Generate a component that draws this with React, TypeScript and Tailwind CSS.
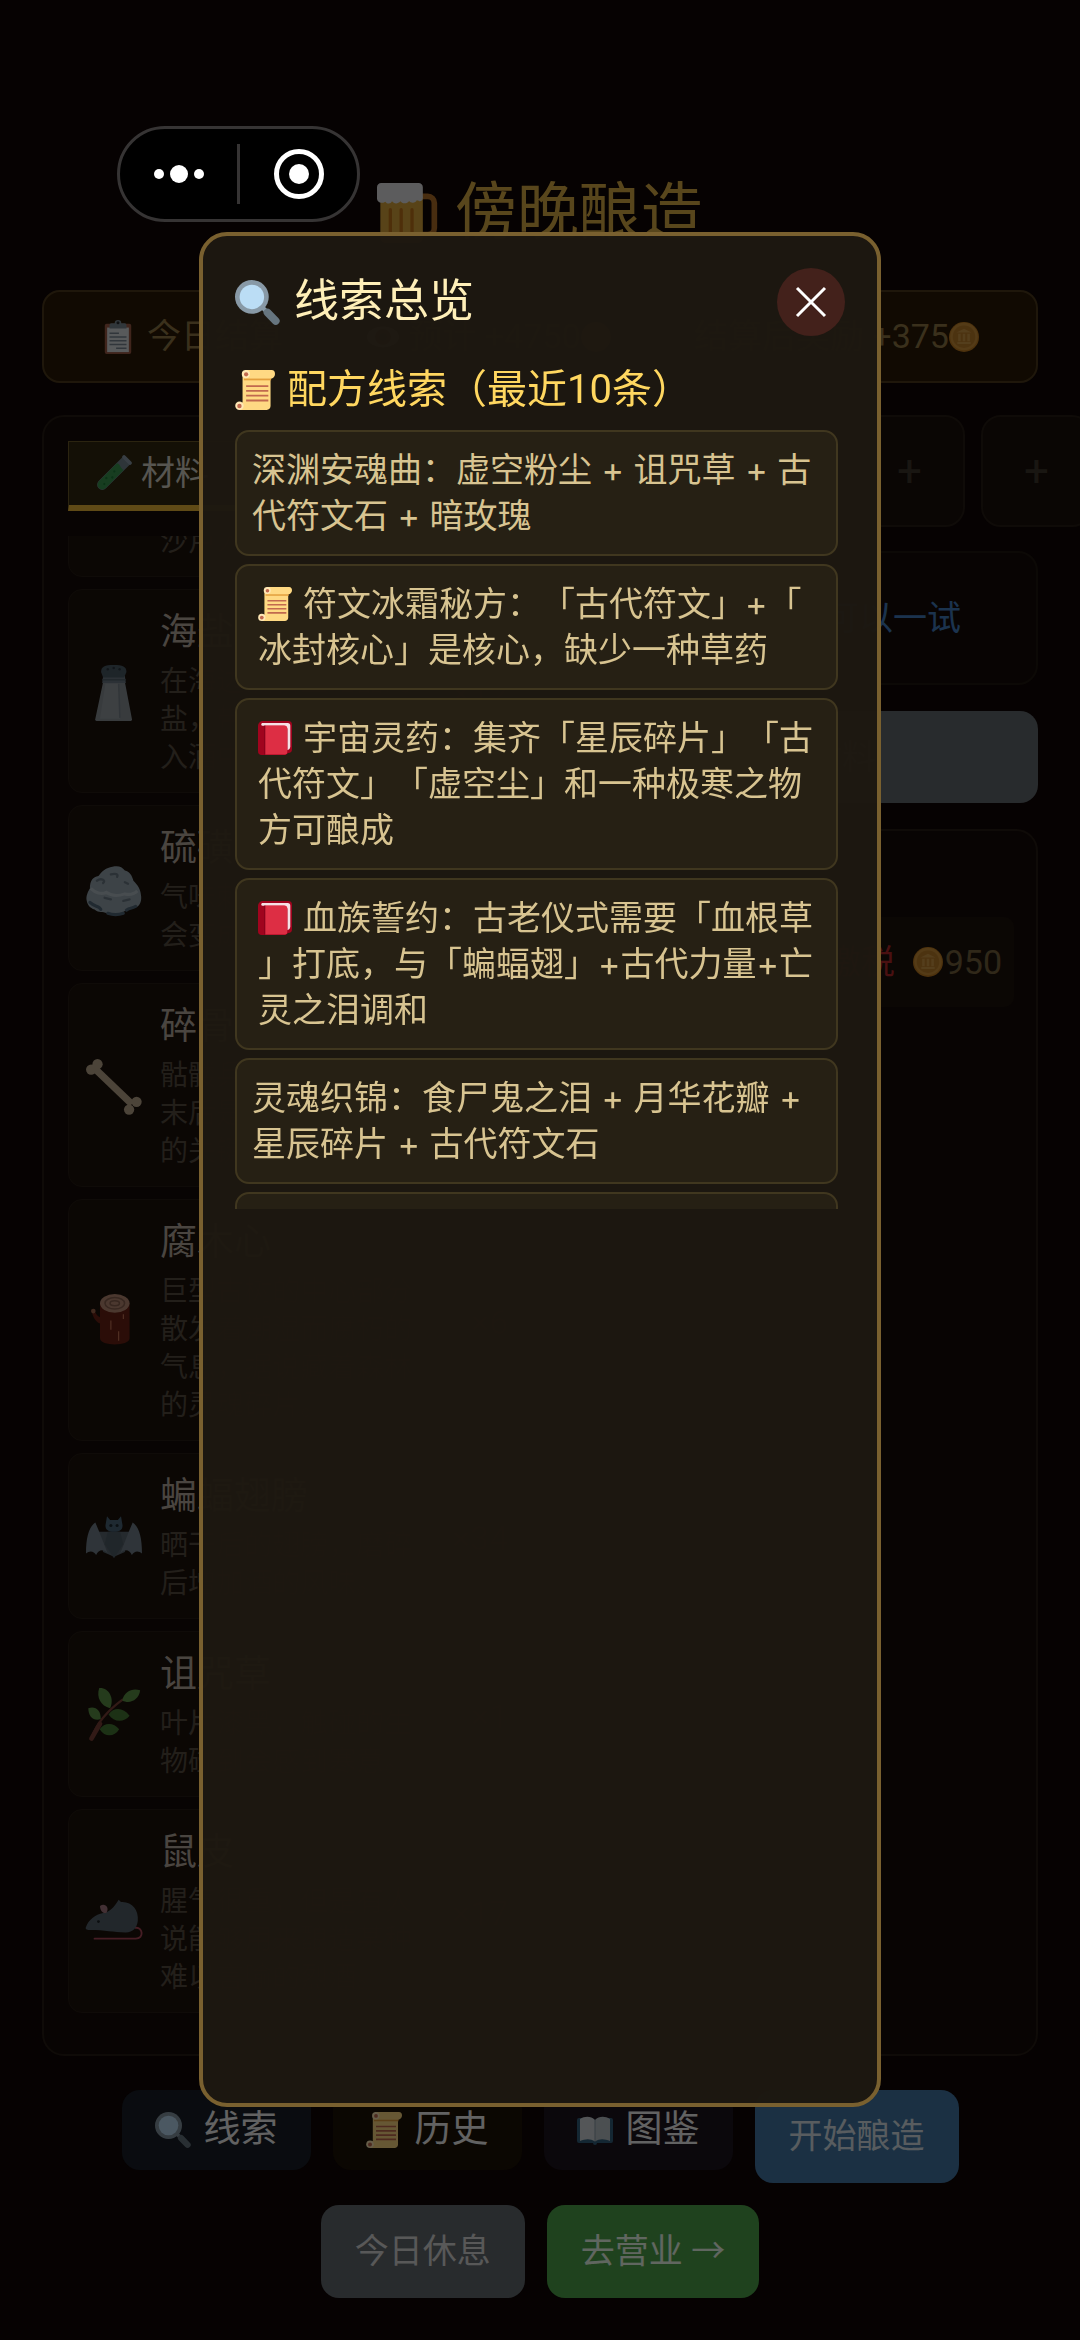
import type { ReactNode } from 'react';

type IconName =
  | 'beer'
  | 'clipboard'
  | 'tube'
  | 'search'
  | 'scroll'
  | 'book'
  | 'openBook'
  | 'coin'
  | 'eye'
  | 'salt'
  | 'rock'
  | 'bone'
  | 'wood'
  | 'bat'
  | 'herb'
  | 'rat';

const icons: Record<IconName, ReactNode> = {
  beer: (
    <>
      <path d="M26 8h6a4 4 0 0 1 4 4v15a4 4 0 0 1-4 4h-6" fill="none" stroke="#B5702A" strokeWidth="3.4" transform="translate(-1.6 0)" />
      <path d="M2 8h25.500v25a3 3 0 0 1-3 3h-19.500a3 3 0 0 1-3-3z" fill="#DDA93C" />
      <path d="M8 16v15M14.500 16v15M21 16v15" stroke="#C4761A" strokeWidth="2" strokeLinecap="round" />
      <path d="M2.500 0h22.500a2.500 2.500 0 0 1 2.500 2.500V9c0 2-2.500 2.500-3.500 1.200C23 12.500 20 12 19.300 10.800 18 12.800 15 12.500 14 11c-1.500 1.800-4 1.500-5 0-1 2-3 1.500-4 .2C2.500 12.800 0 11.500 0 9.500v-7A2.500 2.500 0 0 1 2.500 0z" fill="#E6E7E8" />
    </>
  ),
  clipboard: (
    <>
      <rect x="4" y="4" width="28" height="32" rx="2" fill="#A05C48" />
      <rect x="6.500" y="8" width="23" height="26" fill="#DCE0E4" />
      <path d="M11 3.500h3.500a3.500 3.500 0 0 1 7 0H25a2 2 0 0 1 2 2V9H9V5.500a2 2 0 0 1 2-2z" fill="#7C8A94" />
      <circle cx="18" cy="3" r="1.600" fill="#292F33" />
      <path d="M9 14h10M9 18h18M9 22h18M9 26h18M16 30h11" stroke="#7A8894" strokeWidth="1.600" />
    </>
  ),
  tube: (
    <g transform="rotate(45 18 18)">
      <path d="M12.500-3h11v37a5.500 5.500 0 0 1-11 0z" fill="#73848E" />
      <path d="M13 7c4-2 6 1.500 10 0v27a5 5 0 0 1-10 0z" fill="#3A9A52" />
      <rect x="11.500" y="-5" width="13" height="4" rx="2" fill="#8C9CAA" />
      <circle cx="17" cy="15" r="1.200" fill="#1F7E3A" />
      <circle cx="20" cy="21" r="1.300" fill="#1F7E3A" />
      <circle cx="16" cy="26" r="1.300" fill="#1F7E3A" />
      <circle cx="19" cy="32" r="1.200" fill="#1F7E3A" />
    </g>
  ),
  search: (
    <>
      <path d="M21 21l4 4" stroke="#8899A6" strokeWidth="3.500" />
      <path d="M26 26l6.600 6.800" stroke="#66757F" strokeWidth="6.200" strokeLinecap="round" />
      <circle cx="13.500" cy="13.500" r="13.500" fill="#8899A6" />
      <circle cx="13.500" cy="13.500" r="9.800" fill="#BBDDF5" />
    </>
  ),
  scroll: (
    <>
      <path d="M9.500 0H33c2 0 3 1.500 3 3.500S34.500 7.500 32 8v24.500c0 2-1.500 3.500-3.500 3.500H4V31l2.800-2V4z" fill="#FFD983" />
      <path d="M8 8.500h24.500" stroke="#E39F3D" strokeWidth="1.600" />
      <circle cx="9.800" cy="3.700" r="3.700" fill="#FFE8B6" />
      <circle cx="10" cy="3.900" r="1.900" fill="#C1694F" />
      <circle cx="4" cy="32.200" r="3.800" fill="#FFE8B6" />
      <circle cx="4" cy="32.400" r="2" fill="#C1694F" />
      <path d="M10 14.500h20M10 18.800h20M10 23.100h20M10 27.400h20" stroke="#C1694F" strokeWidth="1.700" />
    </>
  ),
  book: (
    <>
      <path d="M5 0h27a4 4 0 0 1 4 4v26a4 4 0 0 1-4 4l-3 2H4a4 4 0 0 1-4-4V5a5 5 0 0 1 5-5z" fill="#A0041E" />
      <path d="M5 2.200h26.500a2.700 2.700 0 0 1 2.700 2.700v22.600a4 4 0 0 1-3 3.500V8L28 5H4.500c-1.500 0-1.500-2.800.5-2.800z" fill="#F5E1E6" />
      <path d="M7.500 4.800h20.500a3 3 0 0 1 3 3V33a2.500 2.500 0 0 1-2.500 2.500H7.500z" fill="#DD2E44" />
      <path d="M7.200 4.500v31" stroke="#7C0119" strokeWidth=".8" />
    </>
  ),
  openBook: (
    <>
      <path d="M2 6h13l3 2 3-2h13a2 2 0 0 1 2 2v21a2 2 0 0 1-2 2H20a2 2 0 0 1-4 0H2a2 2 0 0 1-2-2V8a2 2 0 0 1 2-2z" fill="#34617F" />
      <path d="M3 7c5-3 11-3 15 1v21.500C13 26 8 27 3 29z" fill="#D2D8DC" />
      <path d="M33 7c-5-3-11-3-15 1v21.500c5-3.500 10-2.500 15-.5z" fill="#BCC5CB" />
      <path d="M18 8v21" stroke="#8899A6" strokeWidth="1" />
    </>
  ),
  coin: (
    <>
      <circle cx="18" cy="18" r="18" fill="#C27D22" />
      <circle cx="18" cy="17.400" r="16.500" fill="#D1943A" />
      <circle cx="18" cy="17.600" r="13.500" fill="#BF7F2A" />
      <path d="M18 8l9 4.500H9zM11 14h3v9h-3zM16.500 14h3v9h-3zM22 14h3v9h-3zM10 24h16v2.500H10z" fill="#D39B48" />
    </>
  ),
  eye: (
    <>
      <ellipse cx="18" cy="18" rx="17" ry="11" fill="#F5F8FA" />
      <circle cx="18" cy="18" r="8.500" fill="#8A4B38" />
      <circle cx="18" cy="18" r="4" fill="#292F33" />
    </>
  ),
  salt: (
    <>
      <path d="M11 11h14l4.500 23.500a1 1 0 0 1-1 1.500h-21.500a1 1 0 0 1-1-1.500z" fill="#8C949A" />
      <path d="M12.500 12h8.500l1 22.500H9z" fill="#99A0A6" />
      <path d="M21 12l.8 22" stroke="#7C868E" strokeWidth="1" />
      <path d="M11 7h14l.6 4.500H10.400z" fill="#6F7C87" />
      <path d="M10.500 9.500h15" stroke="#56646F" strokeWidth="1" />
      <path d="M9.700 4.500C9.700 1 12 0 17.800 0S26 1 26 4.500L24.500 8h-13.500z" fill="#4D5C68" />
      <circle cx="14" cy="2.800" r=".8" fill="#2E3942" />
      <circle cx="17.800" cy="2" r=".8" fill="#2E3942" />
      <circle cx="21.600" cy="2.800" r=".8" fill="#2E3942" />
    </>
  ),
  rock: (
    <>
      <path d="M.5 25c-.8-3 .8-6 2-8 0-5 2-7.500 5.500-8 2-3 5-5.500 9-6 4-.8 6 0 8 2.500 3 .8 4.500 3 5.500 6.500 3 3 4.500 5.500 4.800 9 .8 4-.8 7-2.800 8-3 1.500-5 1-7.500 2.500-3 2.500-8 3-11.500 1.500-3-1.500-5 0-8-2.500-3-1-4.500-3-5-5.500z" fill="#98A7B1" />
      <path d="M3 17c3 3 7 4 10 2.500 4 3 9 2 12 1 4 1 6 0 8-2" fill="none" stroke="#B4C0C8" strokeWidth="2" />
      <path d="M7 12c3-2 6 0 4 1.500M16 8c3-1 5 0 4 1.500M25 13l2 1M12 23l4 1M24 25l4-1" fill="none" stroke="#6D7C87" strokeWidth="1.500" strokeLinecap="round" />
      <path d="M2.500 26c3 3 6 2 7 4.500M26 31c2-2 4-1 6-2.500M14 33c3 1 7 1 10 0" fill="none" stroke="#54697B" strokeWidth="2" strokeLinecap="round" />
    </>
  ),
  bone: (
    <g fill="#BFAB90">
      <path d="M6 6.500L29.500 29" stroke="#BFAB90" strokeWidth="4.500" />
      <circle cx="3.300" cy="6.800" r="3.300" />
      <circle cx="7.400" cy="3.300" r="3.300" />
      <circle cx="27.700" cy="32.500" r="3.300" />
      <circle cx="32.500" cy="27.500" r="3.300" />
    </g>
  ),
  wood: (
    <>
      <path d="M9 6h19v22.500c0 5.300-19 5.300-19 0V19c-3-1-5-5-5.300-8l1.800-.5c.5 2 1.500 3.500 3.500 4.500z" fill="#6B2114" />
      <circle cx="4.700" cy="11" r="1.500" fill="#A0664C" />
      <ellipse cx="18.500" cy="6" rx="9.500" ry="6" fill="#BC8D77" />
      <ellipse cx="18.500" cy="6" rx="6.300" ry="3.700" fill="none" stroke="#8A6250" strokeWidth="1" />
      <ellipse cx="18.500" cy="6" rx="3" ry="1.600" fill="none" stroke="#8A6250" strokeWidth="1" />
      <path d="M16 17v6M21 24v6M24 13v3" stroke="#D07C5E" strokeWidth=".7" />
    </>
  ),
  bat: (
    <g transform="translate(0 -1)">
      <path d="M8 15h20l-3 13-7 3-7-3z" fill="#5C6973" />
      <path d="M6 9c-4 3-6 9-6 20 2-2 5-2 6.500 1C8 26 12 26 14 29L8.500 15z" fill="#75828E" />
      <path d="M30 9c4 3 6 9 6 20-2-2-5-2-6.500 1C28 26 24 26 22 29l5.500-14z" fill="#75828E" />
      <path d="M18 32l-6-9 2-8h8l2 8z" fill="#525F69" />
      <path d="M13.500 5l2 2.500h5l2-2.500 1 6c0 3-2 4-5.500 4s-5.500-1-5.500-4z" fill="#4B667B" />
      <circle cx="16" cy="11" r="1" fill="#1D2930" />
      <circle cx="20" cy="11" r="1" fill="#1D2930" />
    </g>
  ),
  herb: (
    <>
      <path d="M4 31C7 23 12 16 23.500 7.500" fill="none" stroke="#7D4238" strokeWidth="1.500" strokeLinecap="round" />
      <path d="M3.500 32.500L9 23" stroke="#7D4238" strokeWidth="3" strokeLinecap="round" />
      <path d="M8.500 0c6-.5 10 6.500 7 13C9.500 11.500 6.500 6 8.500 0z" fill="#5E9447" />
      <path d="M23.300 8c1.500-6 6.500-8 11.500-6.500-.8 6.500-7 9-11.500 6.500z" fill="#5E9447" />
      <path d="M1.500 13c4.500-1.500 8 1 8 7-4.500 1.500-8-1.500-8-7z" fill="#5E9447" />
      <path d="M14.500 17c3.500-5 9.500-4.500 13.500.8-3.500 4.500-10 4.500-13.500-.8z" fill="#487C35" />
      <path d="M8.800 26.500c3-4.500 9-4.500 12.500 0-3 5-9 5.500-12.500 0z" fill="#487C35" />
    </>
  ),
  rat: (
    <>
      <path d="M32 27.500c4.500-.5 5.500 7 0 7H5.500" fill="none" stroke="#B04A5A" strokeWidth="1.200" strokeLinecap="round" />
      <path d="M0 27c1.500-4.500 6-8 11-9 4-.5 7-3.500 10-8.500l1.500 1.500c7-.5 11.500 5 10.800 12-.5 4.500-3 7.500-7.800 7.500-8 0-13-1.500-23-1.500-2.500 0-3-1-2.500-2z" fill="#56636D" />
      <path d="M9 13.500c3-2.500 6.500 1 4 4.500-2.500.5-4-2-4-4.500z" fill="#A77883" />
      <circle cx="8" cy="23.500" r=".9" fill="#1D2327" />
    </>
  ),
};

const Icon = ({ name, className }: { name: IconName; className: string }) => (
  <svg viewBox="0 0 36 36" className={`shrink-0 overflow-visible ${className}`} aria-hidden="true">
    {icons[name]}
  </svg>
);

const materials: { icon: IconName; name: string; count: number; lines: string[] }[] = [
  { icon: 'rock', name: '沙晶', count: 9, lines: ['荒漠深处的透明晶体', '夜里会发出微弱的光', '沙卢人用它来占卜。'] },
  { icon: 'salt', name: '海盐', count: 12, lines: ['在海边礁石上结晶的', '盐，带着潮汐气息加', '入酒中可提鲜。'] },
  { icon: 'rock', name: '硫磺', count: 8, lines: ['气味刺鼻的矿石燃烧', '会变成蓝色火焰。'] },
  { icon: 'bone', name: '碎骨', count: 15, lines: ['骷髅兵的残骸磨成粉', '末后是许多诡异药剂', '的关键材料。'] },
  { icon: 'wood', name: '腐木心', count: 6, lines: ['巨型古树的中心部分', '散发着潮湿而腐朽的', '气息，据说藏着森林', '的灵魂碎片。'] },
  { icon: 'bat', name: '蝙蝠翅膀', count: 34, lines: ['晒干后的翅膀，磨碎', '后增加酒的风味。'] },
  { icon: 'herb', name: '诅咒草', count: 1, lines: ['叶片漆黑，触碰的生', '物碰到会感到寒意。'] },
  { icon: 'rat', name: '鼠皮', count: 17, lines: ['腥气很重，但是有人', '说能够用来酿造某种', '难以言喻的烈酒。'] },
];

const clues: { icon?: IconName; text: string }[] = [
  { text: '深渊安魂曲：虚空粉尘 + 诅咒草 + 古代符文石 + 暗玫瑰' },
  { icon: 'scroll', text: '符文冰霜秘方：「古代符文」+「冰封核心」是核心，缺少一种草药' },
  { icon: 'book', text: '宇宙灵药：集齐「星辰碎片」「古代符文」「虚空尘」和一种极寒之物方可酿成' },
  { icon: 'book', text: '血族誓约：古老仪式需要「血根草」打底，与「蝙蝠翅」+古代力量+亡灵之泪调和' },
  { text: '灵魂织锦：食尸鬼之泪 + 月华花瓣 + 星辰碎片 + 古代符文石' },
  { text: '月影佳酿：月华花瓣 + 蝙蝠翅膀 + 海盐' },
];

const tools: { icon: IconName; label: string; color: string }[] = [
  { icon: 'search', label: '线索', color: 'bg-[#192028]' },
  { icon: 'scroll', label: '历史', color: 'bg-[#1c1205]' },
  { icon: 'openBook', label: '图鉴', color: 'bg-[#1c141e]' },
];

const SummaryBar = () => (
  <div className="mt-[37px] flex h-[93px] items-center justify-between rounded-[18px] border-2 border-[#4e3b1c] bg-[#2b1a05] px-[57px] text-[34px] text-[#917846]">
    <div className="flex items-center gap-3">
      <Icon name="clipboard" className="size-[34px]" />
      今日结算
    </div>
    <div className="flex items-center">
      <Icon name="eye" className="mr-2 size-[34px]" />
      预计 +4750
      <Icon name="coin" className="size-[30px]" />
    </div>
    <div className="flex items-center">
      结算后奖励 +375
      <Icon name="coin" className="size-[30px]" />
    </div>
  </div>
);

const MaterialPanel = () => (
  <section className="flex w-[510px] shrink-0 flex-col rounded-[22px] border-2 border-[#261c14] bg-[#160c08] px-6 pt-6 pb-[41px]">
    <div className="flex shrink-0">
      <button className="flex h-[70px] flex-1 items-center gap-[11px] border border-b-[6px] border-[#6c5a28] border-b-[#eeb937] bg-[#32280f] pl-[27px] text-[34px] text-[#d8d4c8]">
        <Icon name="tube" className="size-[34px]" />
        材料
      </button>
      <button className="h-[70px] flex-1 text-[34px] text-[#6c6658]">酒品</button>
    </div>

    <ul className="mt-[25px] flex min-h-0 flex-1 flex-col justify-end gap-3 overflow-hidden">
      {materials.map((item) => (
        <li
          key={item.name}
          className="flex shrink-0 items-center gap-[18px] rounded-[14px] border border-[#261c14] bg-[#1c120c] px-[17px] pt-[19px] pb-[15px]"
        >
          <Icon name={item.icon} className="size-[56px]" />
          <div className="min-w-0 flex-1">
            <h3 className="mb-[6px] text-[37px] leading-[48px] text-[#b9ada0]">{item.name}</h3>
            <p className="text-[28px] leading-[38px] whitespace-pre text-[#584e41]">{item.lines.join('\n')}</p>
          </div>
          <span className="text-[34px] text-[#584e41]">×{item.count}</span>
        </li>
      ))}
    </ul>
  </section>
);

const BrewPanel = () => (
  <section className="flex min-w-0 flex-1 flex-col">
    <div className="flex shrink-0 gap-4 pl-[22px]">
      {[1, 2, 3, 4].map((slot) => (
        <button
          key={slot}
          aria-label={`材料槽 ${slot}`}
          className="flex h-[112px] w-[111px] shrink-0 items-center justify-center rounded-[20px] border-2 border-[#261c14] bg-[#190f0a] text-[44px] text-[#3f382e]"
        >
          +
        </button>
      ))}
    </div>
    <div className="mt-6 flex h-[134px] shrink-0 items-center justify-center rounded-[20px] border-2 border-[#20170f] bg-[#160c08] text-[34px] text-[#4581c4]">
      看起来似乎可以一试
    </div>
    <button className="mt-[26px] h-[92px] shrink-0 rounded-[18px] bg-[#646b70] text-[34px] text-[#cfd3d6]">
      清空材料
    </button>
    <div className="mt-[26px] flex-1 rounded-[22px] border-2 border-[#261c14] bg-[#160c08] px-[22px] pt-[86px]">
      <div className="flex h-[90px] items-center justify-end rounded-[10px] bg-[#1c120c] pr-3 text-[34px] text-[#786440]">
        <span className="mr-[18px] text-[#b82a2c]">缴税</span>
        <Icon name="coin" className="mr-[2px] size-[30px]" />
        950
      </div>
    </div>
  </section>
);

const ClueDialog = () => (
  <div className="fixed inset-0 flex bg-black/60 px-[199px] pt-[232px] pb-[233px]">
    <div
      role="dialog"
      aria-labelledby="clue-title"
      className="min-w-0 flex-1 rounded-[28px] border-4 border-[#79602f] bg-[#1d1710]/98 p-8"
    >
      <div className="flex items-center justify-between">
        <h2 id="clue-title" className="flex items-center gap-[14px] text-[45px] leading-[68px] text-[#ffefb8]">
          <Icon name="search" className="size-[45px]" />
          线索总览
        </h2>
        <button aria-label="关闭" className="flex size-[68px] items-center justify-center rounded-full bg-[#43211b]">
          <svg viewBox="0 0 32 32" className="size-8" aria-hidden="true">
            <path d="M2 2l28 28M30 2L2 30" stroke="#fff" strokeWidth="3" />
          </svg>
        </button>
      </div>

      <h3 className="mt-6 mb-[10px] flex items-center gap-3 text-[40px] leading-[60px] text-[#ffd760]">
        <Icon name="scroll" className="size-10" />
        配方线索（最近10条）
      </h3>

      <ul className="mr-[7px] flex max-h-[33.3vh] flex-col gap-2 overflow-hidden font-['Inter','Noto_Sans_CJK_SC',sans-serif] text-[34px] leading-[46px] text-[#d8c491] [line-break:anywhere] [text-spacing-trim:space-all]">
        {clues.map((clue) => (
          <li
            key={clue.text}
            className={`shrink-0 rounded-[14px] border-2 border-[#40371f] bg-[#262014] py-[15px] pr-[14px] ${clue.icon ? 'pl-[21px]' : 'pl-[15px]'}`}
          >
            {clue.icon && <Icon name={clue.icon} className="mr-[11px] inline size-[34px] align-[-5px]" />}
            {clue.text}
          </li>
        ))}
      </ul>
    </div>
  </div>
);

const Capsule = () => (
  <div className="fixed top-[126px] left-[117px] flex h-24 w-[243px] items-center rounded-full border-3 border-[#363434] bg-black">
    <button aria-label="更多" className="flex flex-1 items-center justify-center gap-[6px]">
      <span className="size-[10px] rounded-full bg-white" />
      <span className="size-[18px] rounded-full bg-white" />
      <span className="size-[10px] rounded-full bg-white" />
    </button>
    <span className="h-[60px] w-[3px] bg-[#363434]" />
    <button aria-label="退出" className="flex flex-1 items-center justify-center">
      <span className="flex size-[50px] items-center justify-center rounded-full border-5 border-white">
        <span className="size-5 rounded-full bg-white" />
      </span>
    </button>
  </div>
);

const App = () => {
  return (
    <div className="flex h-screen flex-col overflow-hidden bg-[#0f0505] px-[42px] pt-[173px] pb-[42px] font-['Roboto','Noto_Sans_CJK_SC',sans-serif]">
      <h1 className="flex items-center justify-center gap-[18px] text-[62px] leading-[80px] text-[#dcae46]">
        <Icon name="beer" className="size-[60px]" />
        傍晚酿造
      </h1>

      <SummaryBar />

      <main className="mt-8 flex min-h-0 flex-1 gap-[26px]">
        <MaterialPanel />
        <BrewPanel />
      </main>

      <div className="mt-[34px] flex flex-wrap items-start justify-center gap-[22px] text-[34px]">
        {tools.map((tool) => (
          <button
            key={tool.label}
            className={`flex h-20 items-center gap-[13px] rounded-[18px] px-[33px] text-[37px] text-[#f5f5f5] ${tool.color}`}
          >
            <Icon name={tool.icon} className="size-[36px]" />
            {tool.label}
          </button>
        ))}
        <button className="h-[93px] rounded-[18px] bg-[#4478a7] px-[34px] text-[#dce6ee]">开始酿造</button>
        <button className="h-[93px] rounded-[18px] bg-[#646b70] px-[34px] text-[#dcdcdc]">今日休息</button>
        <button className="h-[93px] rounded-[18px] bg-[#4ea54b] px-[34px] text-[#f0fff0]">去营业 →</button>
      </div>

      <ClueDialog />
      <Capsule />
    </div>
  );
};

export default App;
